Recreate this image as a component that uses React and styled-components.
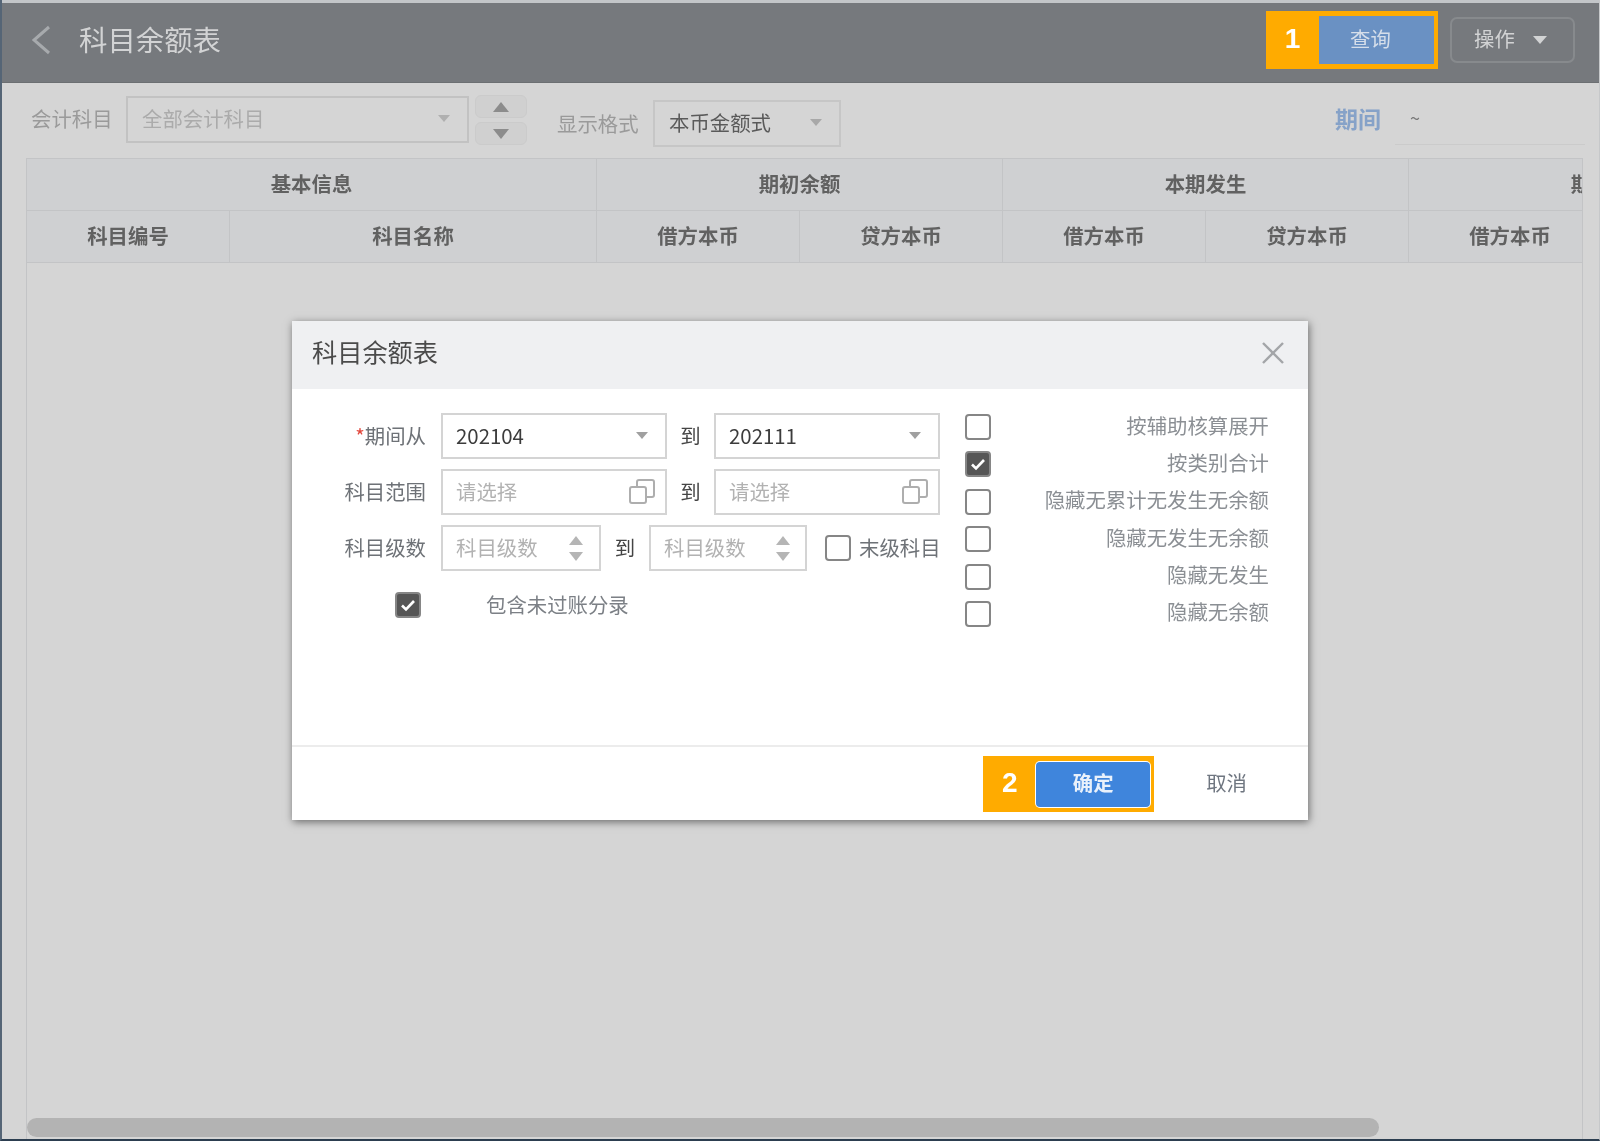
import React from "react";
import styled, { createGlobalStyle } from "styled-components";

const GlobalStyle = createGlobalStyle`
  html, body {
    margin: 0;
    padding: 0;
    background: #d5d5d5;
    overflow: hidden;
  }
  * {
    box-sizing: border-box;
  }
`;

const Shell = styled.div`
  position: relative;
  display: flex;
  flex-direction: column;
  width: 1600px;
  height: 1141px;
  border-left: 2px solid #556576;
  border-right: 1px solid #c6c8ca;
  border-bottom: 2px solid #2c3e50;
  background: #d5d5d5;
  overflow: hidden;
  font-family: "Noto Sans CJK SC", "Noto Sans", sans-serif;
  font-size: 20.4px;
  filter: blur(0.3px);
`;

const Header = styled.header`
  flex: none;
  display: flex;
  align-items: center;
  height: 83px;
  padding: 0 24px 6px 30px;
  background: #76797d;
  border-top: 3px solid #c3c6c9;
  border-bottom: 1px solid #6c6f72;
`;

const BackIcon = styled.svg`
  width: 20px;
  height: 30px;
  margin-right: 27px;
  fill: none;
  stroke: #a7aaad;
  stroke-width: 3;
`;

const PageTitle = styled.h1`
  flex: 1;
  margin: 0 0 2px;
  font-size: 28.4px;
  font-weight: 400;
  color: #d2d3d4;
`;

const Callout = styled.div`
  display: flex;
  align-items: center;
  padding: ${(p) => p.$pad};
  background: #ffab00;
`;

const CalloutNumber = styled.span`
  width: ${(p) => p.$width}px;
  margin-bottom: 2px;
  text-align: center;
  font-family: "Liberation Sans", sans-serif;
  font-size: 28px;
  font-weight: 700;
  color: #fff;
`;

const QueryButton = styled.div`
  display: flex;
  align-items: center;
  justify-content: center;
  width: 115px;
  height: 48px;
  padding: 0 12px 4px 0;
  background: #6a91c3;
  color: #d5deea;
`;

const ActionButton = styled.div`
  display: flex;
  align-items: center;
  gap: 18px;
  width: 125px;
  height: 46px;
  margin-left: 12px;
  padding-left: 22px;
  border: 2px solid #878a8d;
  border-radius: 7px;
  color: #d2d3d4;

  span {
    margin-bottom: 4px;
  }
`;

const Caret = styled.i`
  display: block;
  flex: none;
  width: 0;
  height: 0;
  border-left: ${(p) => p.$size}px solid transparent;
  border-right: ${(p) => p.$size}px solid transparent;
  border-top: ${(p) => p.$size + 1}px solid ${(p) => p.$color};
`;

const Toolbar = styled.div`
  flex: none;
  display: flex;
  align-items: flex-start;
  height: 75px;
  padding: 12px 14px 0 29px;
`;

const ToolField = styled.div`
  display: flex;
  align-items: center;
  height: 50px;
  margin-top: ${(p) => p.$top || 0}px;
  margin-left: ${(p) => p.$left || 0};
`;

const ToolLabel = styled.span`
  width: ${(p) => p.$width}px;
  margin-bottom: ${(p) => p.$lift || 0}px;
  color: #9a9a9a;
`;

const ToolSelect = styled.div`
  display: flex;
  align-items: center;
  justify-content: space-between;
  width: ${(p) => p.$width}px;
  height: 47px;
  margin-bottom: ${(p) => p.$lift || 0}px;
  padding: 0 17px 2px 14px;
  border: 2px solid ${(p) => (p.$disabled ? "#c2c2c2" : "#c6c6c6")};
  color: ${(p) => (p.$disabled ? "#ababab" : "#5a5a5a")};
`;

const Stepper = styled.div`
  display: flex;
  flex-direction: column;
  gap: 4px;
  margin-left: 6px;
`;

const StepButton = styled.div`
  display: flex;
  align-items: center;
  justify-content: center;
  width: 52px;
  height: 23px;
  border: 1px solid #cbcbcb;
  border-radius: 6px;
  background: #d0d0d0;
`;

const Triangle = styled.i`
  display: block;
  width: 0;
  height: 0;
  border-left: ${(p) => p.$size}px solid transparent;
  border-right: ${(p) => p.$size}px solid transparent;
  ${(p) => (p.$up ? "border-bottom" : "border-top")}: ${(p) => p.$size + 2}px solid ${(p) => p.$color};
`;

const PeriodLabel = styled.span`
  width: 60px;
  margin-bottom: 4px;
  font-size: 23px;
  font-weight: 700;
  color: #86a2c8;
`;

const PeriodInput = styled.div`
  width: 190px;
  height: 49px;
  padding: 8px 0 0 15px;
  border-bottom: 1px solid #cbcbcb;
  font-size: 18px;
  color: #777;
`;

const TableArea = styled.div`
  flex: 1;
  display: flex;
  flex-direction: column;
  width: 1557px;
  margin-left: 24px;
  border-left: 1px solid #c3c4c6;
  border-right: 1px solid #c3c4c6;
  overflow: hidden;
`;

const HeadGrid = styled.div`
  flex: none;
  display: grid;
  grid-template-columns: 203px 367px repeat(6, 203px);
  grid-auto-rows: 52px;
  border-top: 1px solid #c3c4c6;
`;

const HeadCell = styled.div`
  grid-column: span ${(p) => p.$span || 1};
  display: flex;
  align-items: center;
  justify-content: center;
  padding-bottom: 4px;
  background: #cfd0d2;
  border-right: 1px solid #c3c4c6;
  border-bottom: 1px solid #c3c4c6;
  font-weight: 700;
  color: #616161;
`;

const TableBody = styled.div`
  flex: 1;
`;

const ScrollThumb = styled.div`
  flex: none;
  width: 1352px;
  height: 19px;
  margin-bottom: 2px;
  border-radius: 10px;
  background: #b3b3b3;
`;

const Modal = styled.div`
  position: absolute;
  left: 290px;
  top: 321px;
  display: flex;
  flex-direction: column;
  width: 1016px;
  height: 499px;
  background: #fff;
  box-shadow: 1px 2px 8px rgba(0, 0, 0, 0.5);
`;

const ModalHead = styled.div`
  flex: none;
  display: flex;
  align-items: center;
  justify-content: space-between;
  height: 68px;
  padding: 0 24px 4px 20px;
  background: #eff0f2;
`;

const ModalTitle = styled.h2`
  margin: 0 0 4px;
  font-size: 25.2px;
  font-weight: 400;
  color: #4b4b4b;
`;

const CloseIcon = styled.svg`
  width: 22px;
  height: 22px;
  stroke: #a3a5a8;
  stroke-width: 2.4;
`;

const ModalBody = styled.div`
  flex: 1;
  display: flex;
  padding-top: 24px;
`;

const FormColumn = styled.div`
  flex: none;
  display: flex;
  flex-direction: column;
  gap: 10px;
  width: 648px;
`;

const FormRow = styled.div`
  display: flex;
  align-items: center;
  height: 46px;
`;

const FormLabel = styled.label`
  flex: none;
  width: 134px;
  margin: 0 15px 2px 0;
  text-align: right;
  color: #6e7277;

  em {
    font-style: normal;
    color: #e2483d;
  }
`;

const Input = styled.div`
  flex: none;
  display: flex;
  align-items: center;
  justify-content: space-between;
  width: ${(p) => p.$width}px;
  height: 46px;
  padding: 0 ${(p) => p.$right || 10}px 2px 13px;
  border: 2px solid #d4d4d4;
  color: ${(p) => (p.$placeholder ? "#b2b2b2" : "#3c3c3c")};
`;

const ToWord = styled.span`
  flex: none;
  width: ${(p) => p.$width}px;
  margin-bottom: 2px;
  text-align: center;
  color: #444;
`;

const CopyIcon = styled.svg`
  width: 26px;
  height: 25px;
  fill: none;
  stroke: #aeaeae;
  stroke-width: 2;
`;

const Spin = styled.div`
  display: flex;
  flex-direction: column;
  gap: 7px;
  margin-top: 2px;
`;

const Box = styled.span`
  flex: none;
  display: flex;
  align-items: center;
  justify-content: center;
  width: 26px;
  height: 26px;
  border: 2px solid #868686;
  border-radius: 4px;
  background: ${(p) => (p.$checked ? "#565656" : "#fff")};
`;

const CheckMark = styled.svg`
  width: 16px;
  height: 14px;
  fill: none;
  stroke: #fff;
  stroke-width: 2.6;
`;

const EndLevel = styled.div`
  flex: none;
  display: flex;
  align-items: center;
  gap: 8px;
  margin-left: 18px;
  white-space: nowrap;
  color: #6e7277;

  span:last-child {
    margin-bottom: 2px;
  }
`;

const PostedRow = styled.div`
  display: flex;
  align-items: center;
  height: 26px;
  margin-top: 11px;
  padding-left: 103px;
  color: #7c8086;

  span:last-child {
    margin: 0 0 3px 65px;
  }
`;

const OptionColumn = styled.div`
  flex: none;
  display: grid;
  grid-auto-rows: 26px;
  row-gap: 11.4px;
  width: 304px;
  margin: 1px 0 0 25px;
`;

const OptionRow = styled.div`
  display: flex;
  align-items: center;
  justify-content: space-between;
  color: #8b8f94;

  span:last-child {
    margin-bottom: 5px;
  }
`;

const ModalFoot = styled.div`
  flex: none;
  display: flex;
  align-items: center;
  justify-content: flex-end;
  height: 75px;
  padding: 0 61px 0 0;
  border-top: 2px solid #ececec;
`;

const ConfirmButton = styled.div`
  display: flex;
  align-items: center;
  justify-content: center;
  width: 114px;
  height: 45px;
  padding-bottom: 4px;
  border-radius: 4px;
  background: #3f85dc;
  box-shadow: 0 0 0 1px #fff;
  font-weight: 700;
  color: #e9f1fb;
`;

const CancelText = styled.span`
  margin: 0 0 4px 52px;
  color: #6f7680;
`;

const groupCols = [
  { title: "基本信息", span: 2 },
  { title: "期初余额", span: 2 },
  { title: "本期发生", span: 2 },
  { title: "期末余额", span: 2 },
];

const subCols = [
  "科目编号",
  "科目名称",
  "借方本币",
  "贷方本币",
  "借方本币",
  "贷方本币",
  "借方本币",
  "贷方本币",
];

const options = [
  { label: "按辅助核算展开" },
  { label: "按类别合计", checked: true },
  { label: "隐藏无累计无发生无余额" },
  { label: "隐藏无发生无余额" },
  { label: "隐藏无发生" },
  { label: "隐藏无余额" },
];

const Check = ({ checked }) => (
  <Box $checked={checked}>
    {checked && (
      <CheckMark viewBox="0 0 16 14">
        <polyline points="2,7.5 6,11.5 14,3" />
      </CheckMark>
    )}
  </Box>
);

const Copy = () => (
  <CopyIcon viewBox="0 0 26 25">
    <rect x="1" y="8" width="16" height="16" rx="2" />
    <path d="M8 8V3a2 2 0 0 1 2-2h13a2 2 0 0 1 2 2v13a2 2 0 0 1-2 2h-6" />
  </CopyIcon>
);

const Spinner = () => (
  <Spin>
    <Triangle $up $size={7} $color="#b5b5b5" />
    <Triangle $size={7} $color="#b5b5b5" />
  </Spin>
);

const App = () => {
  return (
    <>
      <GlobalStyle />
      <Shell>
        <Header>
          <BackIcon viewBox="0 0 20 30">
            <polyline points="17,2 2,15 17,28" />
          </BackIcon>
          <PageTitle>科目余额表</PageTitle>
          <Callout $pad="5px 4px 5px 0">
            <CalloutNumber $width={53}>1</CalloutNumber>
            <QueryButton>查询</QueryButton>
          </Callout>
          <ActionButton>
            <span>操作</span>
            <Caret $size={7} $color="#d2d3d4" />
          </ActionButton>
        </Header>

        <Toolbar>
          <ToolField>
            <ToolLabel $width={95} $lift={4}>会计科目</ToolLabel>
            <ToolSelect $width={343} $lift={2} $disabled>
              全部会计科目
              <Caret $size={6} $color="#b0b0b0" />
            </ToolSelect>
            <Stepper>
              <StepButton><Triangle $up $size={8} $color="#8c8c8c" /></StepButton>
              <StepButton><Triangle $size={8} $color="#8c8c8c" /></StepButton>
            </Stepper>
          </ToolField>
          <ToolField $top={3} $left="30px">
            <ToolLabel $width={96}>显示格式</ToolLabel>
            <ToolSelect $width={188}>
              本币金额式
              <Caret $size={6} $color="#a8a8a8" />
            </ToolSelect>
          </ToolField>
          <ToolField $left="auto">
            <PeriodLabel>期间</PeriodLabel>
            <PeriodInput>~</PeriodInput>
          </ToolField>
        </Toolbar>

        <TableArea>
          <HeadGrid>
            {groupCols.map((col) => (
              <HeadCell key={col.title} $span={col.span}>{col.title}</HeadCell>
            ))}
            {subCols.map((col, i) => (
              <HeadCell key={i}>{col}</HeadCell>
            ))}
          </HeadGrid>
          <TableBody />
          <ScrollThumb />
        </TableArea>

        <Modal>
          <ModalHead>
            <ModalTitle>科目余额表</ModalTitle>
            <CloseIcon viewBox="0 0 22 22">
              <line x1="1" y1="1" x2="21" y2="21" />
              <line x1="21" y1="1" x2="1" y2="21" />
            </CloseIcon>
          </ModalHead>

          <ModalBody>
            <FormColumn>
              <FormRow>
                <FormLabel><em>*</em>期间从</FormLabel>
                <Input $width={226} $right={17}>
                  202104
                  <Caret $size={6} $color="#a0a0a0" />
                </Input>
                <ToWord $width={47}>到</ToWord>
                <Input $width={226} $right={17}>
                  202111
                  <Caret $size={6} $color="#a0a0a0" />
                </Input>
              </FormRow>
              <FormRow>
                <FormLabel>科目范围</FormLabel>
                <Input $width={226} $placeholder>
                  请选择
                  <Copy />
                </Input>
                <ToWord $width={47}>到</ToWord>
                <Input $width={226} $placeholder>
                  请选择
                  <Copy />
                </Input>
              </FormRow>
              <FormRow>
                <FormLabel>科目级数</FormLabel>
                <Input $width={160} $right={16} $placeholder>
                  科目级数
                  <Spinner />
                </Input>
                <ToWord $width={48}>到</ToWord>
                <Input $width={158} $right={15} $placeholder>
                  科目级数
                  <Spinner />
                </Input>
                <EndLevel>
                  <Check />
                  <span>末级科目</span>
                </EndLevel>
              </FormRow>
              <PostedRow>
                <Check checked />
                <span>包含未过账分录</span>
              </PostedRow>
            </FormColumn>

            <OptionColumn>
              {options.map((opt) => (
                <OptionRow key={opt.label}>
                  <Check checked={opt.checked} />
                  <span>{opt.label}</span>
                </OptionRow>
              ))}
            </OptionColumn>
          </ModalBody>

          <ModalFoot>
            <Callout $pad="6px 4px 5px 0">
              <CalloutNumber $width={53}>2</CalloutNumber>
              <ConfirmButton>确定</ConfirmButton>
            </Callout>
            <CancelText>取消</CancelText>
          </ModalFoot>
        </Modal>
      </Shell>
    </>
  );
};

export default App;
